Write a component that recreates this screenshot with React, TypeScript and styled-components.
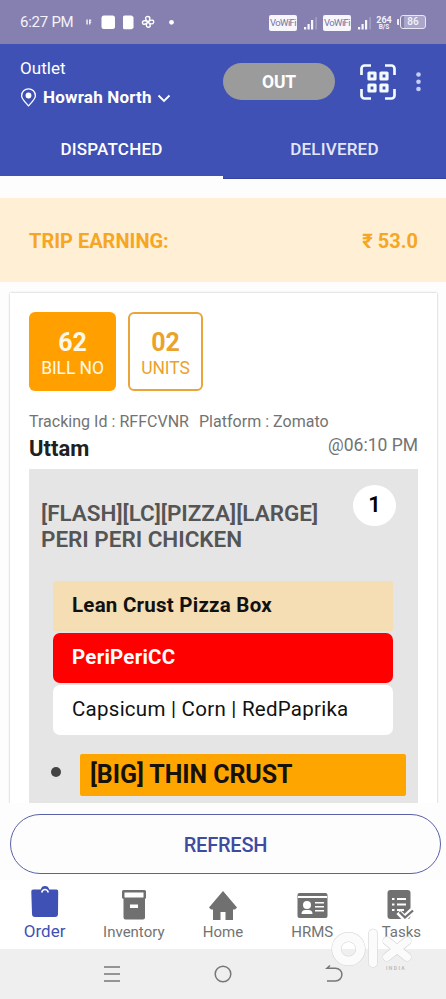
import React from "react";
import styled, { createGlobalStyle } from "styled-components";

const Global = createGlobalStyle`
  * { box-sizing: border-box; }
  body { margin: 0; background: #fdfdfd; font-family: Roboto, "Noto Sans", sans-serif; }
`;

const Screen = styled.div`
  position: relative;
  width: 446px;
  height: 999px;
  display: flex;
  flex-direction: column;
  overflow: hidden;
  white-space: nowrap;
`;

const StatusBar = styled.div`
  height: 44px;
  flex: none;
  background: #8580b0;
  color: #f4f2fb;
  display: flex;
  justify-content: space-between;
  padding: 0 20px;
`;
const Clock = styled.span`
  width: 56px;
  font-size: 15px;
  line-height: 46px;
  letter-spacing: -0.25px;
`;
const StatusGroup = styled.div`
  display: flex;
  align-items: center;
`;
const VoWifi = styled.span`
  width: 28px;
  height: 16px;
  margin-top: 2px;
  border-radius: 2px;
  background: #f7f6fd;
  color: #77739a;
  font: 9.5px/16px Roboto, sans-serif;
  letter-spacing: -0.6px;
  text-align: center;
`;
const SignalSlot = styled.span<{ $tight?: boolean }>`
  display: flex;
  padding: 3px ${(p) => (p.$tight ? 0 : 5)}px 0 7px;
`;
const Speed = styled.span`
  display: flex;
  flex-direction: column;
  align-items: center;
  width: 16px;
  margin: 1px 0 0 4px;
  font-size: 9px;
  line-height: 11px;
  font-weight: 700;
`;
const SpeedUnit = styled.span`
  margin-top: -3px;
  font-size: 6.5px;
  line-height: 8px;
`;
const Battery = styled.span`
  position: relative;
  width: 26px;
  height: 14px;
  margin-left: 8px;
  border: 1.5px solid #e9e6f6;
  border-radius: 3px;
  background: linear-gradient(90deg, #8580b0 3px, #aaa6c9 3px);
  font-size: 10px;
  line-height: 12px;
  font-weight: 500;
  text-align: center;
  &::before {
    content: "";
    position: absolute;
    left: -4px;
    top: 3px;
    width: 2px;
    height: 6px;
    background: #f0eefa;
    border-radius: 1px 0 0 1px;
  }
`;

const Header = styled.header`
  height: 76px;
  flex: none;
  background: #3f51b5;
  color: #fff;
  display: flex;
`;
const Outlet = styled.div`
  width: 223px;
  padding: 12px 0 0 20px;
`;
const OutletLabel = styled.div`
  font-size: 17px;
  line-height: 25px;
  letter-spacing: 0.05px;
`;
const OutletName = styled.div`
  display: flex;
  align-items: center;
  height: 32px;
  font-size: 17px;
  font-weight: 700;
  letter-spacing: 0.2px;
  svg:first-child { margin-right: 6px; }
  svg:last-child { margin: 2px 0 0 5px; }
`;
const OutButton = styled.button`
  width: 112px;
  height: 37px;
  margin-top: 19px;
  padding: 1px 0 0;
  border: 0;
  border-radius: 19px;
  background: #9b9b9b;
  color: #fff;
  font: 700 17.5px Roboto, sans-serif;
  letter-spacing: -0.1px;
`;
const ScanIcon = styled.svg`
  margin: 19px 0 0 24px;
`;
const MoreIcon = styled.svg`
  margin: 27px 0 0 19px;
`;

const Tabs = styled.nav`
  display: flex;
  height: 59px;
  flex: none;
`;
const Tab = styled.div<{ $active?: boolean }>`
  flex: 1;
  height: ${(p) => (p.$active ? 56 : 58.5)}px;
  background: #3f51b5;
  border-bottom: ${(p) => (p.$active ? "none" : "1px solid #35459f")};
  color: ${(p) => (p.$active ? "#fff" : "#e4e7f8")};
  font-size: 17px;
  line-height: 59px;
  font-weight: 500;
  letter-spacing: 0.2px;
  text-align: center;
`;

const Earning = styled.div`
  height: 84px;
  flex: none;
  margin-top: 19px;
  padding: 2px 28px 0 29px;
  background: #ffefd5;
  color: #f5a623;
  display: flex;
  align-items: center;
  justify-content: space-between;
  font-size: 20px;
  font-weight: 700;
`;

const Scroller = styled.main`
  height: 521px;
  flex: none;
  padding: 11px 9px 0 10px;
  overflow: hidden;
`;
const Card = styled.section`
  height: 620px;
  padding: 19px 19px 0;
  background: #fff;
  box-shadow: 0 0 2px rgba(0, 0, 0, 0.28);
`;
const Badges = styled.div`
  display: flex;
  gap: 12px;
`;
const Badge = styled.div<{ $filled?: boolean }>`
  width: ${(p) => (p.$filled ? 87 : 75)}px;
  height: 79px;
  padding-top: ${(p) => (p.$filled ? 15 : 13)}px;
  border: ${(p) => (p.$filled ? "none" : "2px solid #e9a538")};
  border-radius: 6px;
  background: ${(p) => (p.$filled ? "#ffa000" : "#fff")};
  color: ${(p) => (p.$filled ? "#fff8e8" : "#eba22d")};
  text-align: center;
  font-size: 17.5px;
  line-height: 20px;
  letter-spacing: -0.1px;
  b { display: block; font-size: 25px; line-height: 31px; letter-spacing: 0; }
`;
const Tracking = styled.div`
  display: flex;
  gap: 10px;
  margin-top: 19px;
  color: #737373;
  font-size: 16px;
  line-height: 24px;
  letter-spacing: 0.02px;
`;
const Customer = styled.div`
  display: flex;
  justify-content: space-between;
  height: 35px;
  color: #737373;
  font-size: 17.5px;
  line-height: 22px;
  b { color: #202020; font-size: 22px; line-height: 30px; letter-spacing: 0; }
`;
const Items = styled.div`
  height: 440px;
  padding: 16px 12px 0;
  background: #e5e5e5;
`;
const ItemHead = styled.div`
  display: flex;
  justify-content: space-between;
  height: 96px;
  padding-right: 10px;
`;
const ItemTitle = styled.h2`
  margin: 15px 0 0;
  color: #555;
  font-size: 22.5px;
  line-height: 26px;
  font-weight: 600;
  letter-spacing: -0.03px;
`;
const Quantity = styled.span`
  width: 43px;
  height: 41px;
  border-radius: 50%;
  background: #fff;
  color: #000;
  font-size: 22px;
  line-height: 40px;
  font-weight: 600;
  text-align: center;
`;
const Ingredients = styled.div`
  display: flex;
  flex-direction: column;
  gap: 2px;
  margin: 0 13px 0 12px;
`;
const Ingredient = styled.div<{ $bg: string; $fg?: string; $bold?: boolean; $radius: number }>`
  height: 50px;
  padding-left: 19px;
  border-radius: ${(p) => p.$radius}px;
  background: ${(p) => p.$bg};
  color: ${(p) => p.$fg || "#111"};
  font-size: 20.5px;
  line-height: 49px;
  font-weight: ${(p) => (p.$bold ? 700 : 400)};
  letter-spacing: ${(p) => (p.$bold ? 0.24 : 0.26)}px;
`;
const Base = styled.div`
  display: flex;
  align-items: center;
  margin-top: 19px;
  padding-left: 10px;
  &::before {
    content: "";
    width: 10px;
    height: 10px;
    margin: 0 19px 6px 0;
    border-radius: 50%;
    background: #444;
  }
`;
const BaseName = styled.div`
  flex: 1;
  height: 42px;
  padding-left: 10px;
  border-radius: 2px;
  background: #ffa500;
  color: #17110b;
  font-size: 25px;
  line-height: 42px;
  font-weight: 700;
  letter-spacing: -0.08px;
`;

const Refresh = styled.button`
  height: 60px;
  flex: none;
  margin: 11px 5px 0 10px;
  padding: 2px 0 0;
  border: 1.3px solid #5962a8;
  border-radius: 30px;
  background: #fdfdfe;
  color: #3f4ba0;
  font: 500 20px Roboto, sans-serif;
  letter-spacing: -0.2px;
`;
const BottomNav = styled.nav`
  height: 69px;
  flex: none;
  margin-top: 6px;
  background: #fff;
  display: flex;
`;
const NavItem = styled.div<{ $active?: boolean }>`
  flex: 1;
  display: flex;
  flex-direction: column;
  align-items: center;
  padding-top: ${(p) => (p.$active ? 6 : 9)}px;
  color: ${(p) => (p.$active ? "#3f51b5" : "#737373")};
  font-size: ${(p) => (p.$active ? 17 : 15)}px;
  line-height: 20px;
  svg { flex: none; margin-bottom: ${(p) => (p.$active ? 3 : 1)}px; }
`;
const SystemNav = styled.div`
  height: 50px;
  flex: none;
  background: #efefef;
  display: flex;
  justify-content: center;
  align-items: center;
  gap: 92px;
`;
const Watermark = styled.svg`
  position: absolute;
  left: 328px;
  top: 926px;
`;

const Signal = () => (
  <svg width="14" height="13" viewBox="0 0 14 13" fill="#f7f5ff">
    <rect x="0" y="10" width="2.2" height="2.5" />
    <rect x="3.5" y="7" width="2.2" height="5.5" />
    <rect x="7" y="3" width="2.2" height="9.5" />
    <rect x="11.5" y="0" width="1.2" height="12.5" opacity=".35" />
  </svg>
);

const Notifications = () => (
  <svg width="100" height="44" viewBox="76 0 100 44" fill="#fff">
    <path d="M86.300 19.500h1.500v5h-1.500zM89 19.500h2.200V21h-.8v.8h.8V23h-.8v1.500H89z" opacity=".85" />
    <rect x="101.500" y="15.500" width="13.500" height="13.500" rx="2.500" />
    <path d="M124.500 15.500h7l2 1.500v11l-2 1.300h-7a1.500 1.500 0 0 1-1.500-1.500V17a1.500 1.500 0 0 1 1.500-1.500z" />
    <path d="M148 22c-4-3-2.500-6 0-5.500 3 .5 2 4 0 5.500zm0 0c4-3.500 6.500-1.500 5.500.8-1 2-4 1-5.500-.8zm0 0c3.500 3 2.500 5.500 0 5.200-2.500-.4-2-3.500 0-5.200zm0 0c-3 3.500-6 2.500-5.500 0 .5-2 3.500-1.500 5.500 0z" fill="none" stroke="#fff" strokeWidth="1.400" />
    <circle cx="171.500" cy="22.300" r="2.400" />
  </svg>
);

const Pin = () => (
  <svg width="17" height="19" viewBox="0 0 17 19">
    <path d="M8.500 17.800C5.500 14.400 1.600 11 1.600 7.700a6.900 6.900 0 0 1 13.800 0c0 3.300-3.900 6.700-6.900 10.100z" fill="none" stroke="#fff" strokeWidth="1.300" />
    <circle cx="8.500" cy="7.500" r="2.900" fill="#fff" />
  </svg>
);
const Chevron = () => (
  <svg width="14" height="10" viewBox="0 0 14 10" fill="none" stroke="#fff" strokeWidth="1.800">
    <path d="M1.500 2.500 7 8l5.500-5.500" />
  </svg>
);

export default function App() {
  return (
    <>
      <Global />
      <Screen>
        <StatusBar>
          <StatusGroup>
            <Clock>6:27 PM</Clock>
            <Notifications />
          </StatusGroup>
          <StatusGroup>
            <VoWifi>VoWiFi</VoWifi>
            <SignalSlot><Signal /></SignalSlot>
            <VoWifi>VoWiFi</VoWifi>
            <SignalSlot $tight><Signal /></SignalSlot>
            <Speed>264<SpeedUnit>B/S</SpeedUnit></Speed>
            <Battery>86</Battery>
          </StatusGroup>
        </StatusBar>

        <Header>
          <Outlet>
            <OutletLabel>Outlet</OutletLabel>
            <OutletName><Pin />Howrah North<Chevron /></OutletName>
          </Outlet>
          <OutButton>OUT</OutButton>
          <ScanIcon width="38" height="38" viewBox="0 0 38 38" fill="none" stroke="#f4fbff">
            <path d="M2.500 12V5.500a3 3 0 0 1 3-3H12M26 2.500h6.500a3 3 0 0 1 3 3V12M35.500 26v6.500a3 3 0 0 1-3 3H26M12 35.500H5.500a3 3 0 0 1-3-3V26" strokeWidth="2.700" />
            <path d="M10 10h6v6h-6zM22 10h6v6h-6zM10 22h6v6h-6zM22 22h6v6h-6z" strokeWidth="3.200" strokeLinejoin="round" />
          </ScanIcon>
          <MoreIcon width="5" height="22" viewBox="0 0 5 22" fill="#c5cef7">
            <circle cx="2.500" cy="3.500" r="2.300" />
            <circle cx="2.500" cy="10.700" r="2.300" />
            <circle cx="2.500" cy="18" r="2.300" />
          </MoreIcon>
        </Header>

        <Tabs>
          <Tab $active>DISPATCHED</Tab>
          <Tab>DELIVERED</Tab>
        </Tabs>

        <Earning><span>TRIP EARNING:</span><span>₹ 53.0</span></Earning>

        <Scroller>
          <Card>
            <Badges>
              <Badge $filled><b>62</b>BILL NO</Badge>
              <Badge><b>02</b>UNITS</Badge>
            </Badges>
            <Tracking><span>Tracking Id : RFFCVNR</span><span>Platform : Zomato</span></Tracking>
            <Customer><b>Uttam</b><span>@06:10 PM</span></Customer>
            <Items>
              <ItemHead>
                <ItemTitle>[FLASH][LC][PIZZA][LARGE]<br />PERI PERI CHICKEN</ItemTitle>
                <Quantity>1</Quantity>
              </ItemHead>
              <Ingredients>
                <Ingredient $bg="#f5deb3" $bold $radius={2}>Lean Crust Pizza Box</Ingredient>
                <Ingredient $bg="#ff0000" $fg="#fff" $bold $radius={7}>PeriPeriCC</Ingredient>
                <Ingredient $bg="#fff" $radius={7}>Capsicum | Corn | RedPaprika</Ingredient>
              </Ingredients>
              <Base><BaseName>[BIG] THIN CRUST</BaseName></Base>
            </Items>
          </Card>
        </Scroller>

        <Refresh>REFRESH</Refresh>

        <BottomNav>
          <NavItem $active>
            <svg width="30" height="32" viewBox="0 0 30 32">
              <path d="M10.800 3.500a4.300 4.300 0 0 1 8.400 0H26a2 2 0 0 1 2.200 2.200L28 28a3 3 0 0 1-3 3H5a3 3 0 0 1-3-3L1.300 5.700a2 2 0 0 1 2-2.200z" fill="#3f51b5" />
              <path d="M11.700 6.500c1-4 5.600-4 6.600 0" fill="none" stroke="#fff" strokeWidth="1.600" />
            </svg>
            Order
          </NavItem>
          <NavItem>
            <svg width="26" height="32" viewBox="0 0 26 32">
              <path d="M2.500 1h21A1.500 1.500 0 0 1 25 2.500V9l-1 1v18.500a2 2 0 0 1-2 2H4.500a2 2 0 0 1-2-2V10L1 9V2.500A1.500 1.500 0 0 1 2.500 1z" fill="#707070" />
              <path d="M3.500 3.500h19v5h-19zM9 15.500h8V19H9z" fill="#fff" />
            </svg>
            Inventory
          </NavItem>
          <NavItem>
            <svg width="30" height="32" viewBox="0 0 30 32">
              <path d="M15 2 29 18.500 27 20.500h-2V31h-7.500v-8h-5v8H5V20.500H3L1 18.500z" fill="#707070" />
            </svg>
            Home
          </NavItem>
          <NavItem>
            <svg width="31" height="32" viewBox="0 0 31 32">
              <rect x=".5" y="4" width="30" height="25" rx="2" fill="#707070" />
              <g fill="#fff">
                <path d="M1 7h29v2H1zM18 13h9v1.500h-9zM18 17h9v1.500h-9zM18 21h9v1.500h-9z" />
                <circle cx="10" cy="16" r="4" />
                <path d="M4.500 25q0-4 4-4h3q4 0 4 4z" />
              </g>
            </svg>
            HRMS
          </NavItem>
          <NavItem>
            <svg width="32" height="32" viewBox="0 0 32 32">
              <rect x="2.500" y="1" width="23" height="29" rx="3" fill="#707070" />
              <path d="M7 9h2.500v2H7zm5 0h9v2h-9zm-5 5.500h2.500v2H7zm5 0h9v2h-9zM7 20h2.500v2H7zm5 0h7v2h-7z" fill="#fff" />
              <path d="m13.500 23 6 6 8-7.500" fill="none" stroke="#fff" strokeWidth="6" />
              <path d="m14.500 23 5.500 5.500 8-7" fill="none" stroke="#707070" strokeWidth="2.300" />
            </svg>
            Tasks
          </NavItem>
        </BottomNav>

        <SystemNav>
          <svg width="18" height="20" viewBox="0 0 18 20" stroke="#777" strokeWidth="1.500"><path d="M1 3h16M1 10h16M1 17h16" /></svg>
          <svg width="20" height="20" viewBox="0 0 20 20" fill="none" stroke="#777" strokeWidth="1.500"><circle cx="10" cy="10" r="7.800" /></svg>
          <svg width="18" height="20" viewBox="0 0 18 20" fill="none" stroke="#777" strokeWidth="1.500"><path d="M5 1.500 2 4.200h8.500a6.400 6.400 0 0 1 0 12.800H2" /></svg>
        </SystemNav>

        <Watermark width="90" height="48" viewBox="0 0 90 48">
          <g fill="none" stroke="#d2d2d2" strokeLinecap="round">
            <circle cx="20.500" cy="23" r="12" strokeWidth="10" />
            <path d="M45 7.500v29.500" strokeWidth="9.500" />
            <path d="m59 15 20 16m0-16L59 31" strokeWidth="9" />
          </g>
          <g fill="none" stroke="#fbfbfb" strokeLinecap="round">
            <circle cx="20.500" cy="23" r="12" strokeWidth="9" />
            <path d="M45 7.500v29.500" strokeWidth="8.500" />
            <path d="m59 15 20 16m0-16L59 31" strokeWidth="8" />
          </g>
          <text x="58" y="43.500" fill="#bdbdbd" fontSize="5" fontWeight="700" letterSpacing="1.400">INDIA</text>
        </Watermark>
      </Screen>
    </>
  );
}
